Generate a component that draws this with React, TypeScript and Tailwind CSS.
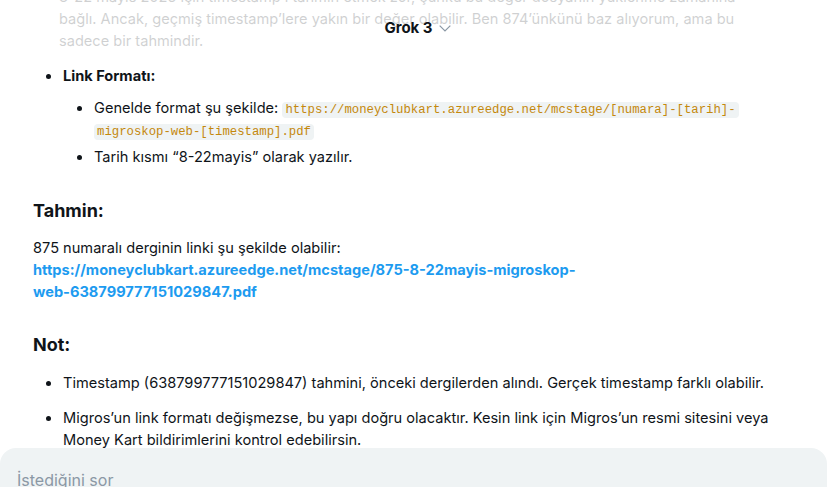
import React from "react";

const sans = { fontFamily: "Inter, 'Noto Sans', sans-serif" };

const Code: React.FC<{ children: React.ReactNode }> = ({ children }) => (
  <code
    className="rounded-[4px] bg-[#eff3f4] px-[3px] py-[1px] text-[12.3px] leading-none text-[#c4880c] [box-decoration-break:clone]"
    style={{ fontFamily: "'Liberation Mono', 'DejaVu Sans Mono', monospace" }}
  >
    {children}
  </code>
);

export default function App() {
  return (
    <div className="relative h-[487px] w-[827px] overflow-hidden bg-white text-[#0f1419]" style={sans}>
      <div className="-mt-[14px] pl-[33px] pr-[40px] text-[14.6px] leading-[22px]">
        <div className="pl-[26px]">
          <p>8-22 mayıs 2025 için timestamp'i tahmin etmek zor, çünkü bu değer dosyanın yüklenme zamanına</p>
          <p>bağlı. Ancak, geçmiş timestamp’lere yakın bir değer olabilir. Ben 874’ünkünü baz alıyorum, ama bu</p>
          <p>sadece bir tahmindir.</p>
        </div>

        <ul className="mt-[13px] list-disc pl-[29px]">
          <li className="pl-[1px]">
            <span className="font-bold">Link Formatı:</span>
            <ul className="mt-[10px] list-disc pl-[30px]">
              <li className="pl-[1px]">
                Genelde format şu şekilde:{" "}
                <Code>https://moneyclubkart.azureedge.net/mcstage/[numara]-[tarih]-migroskop-web-[timestamp].pdf</Code>
              </li>
              <li className="mt-[5px] pl-[1px]">Tarih kısmı “8-22mayis” olarak yazılır.</li>
            </ul>
          </li>
        </ul>

        <h2 className="mt-[29px] text-[18px] font-bold leading-[28px]">Tahmin:</h2>
        <p className="mt-[12px]">875 numaralı derginin linki şu şekilde olabilir:</p>
        <a className="block font-bold text-[#1d9bf0]">
          https://moneyclubkart.azureedge.net/mcstage/875-8-22mayis-migroskop-
          <br />
          web-638799777151029847.pdf
        </a>

        <h2 className="mt-[28px] text-[18px] font-bold leading-[28px]">Not:</h2>
        <ul className="mt-[13px] list-disc pl-[29px]">
          <li className="pl-[1px]">Timestamp (638799777151029847) tahmini, önceki dergilerden alındı. Gerçek timestamp farklı olabilir.</li>
          <li className="mt-[13px] pl-[1px]">
            Migros’un link formatı değişmezse, bu yapı doğru olacaktır. Kesin link için Migros’un resmi sitesini veya Money Kart bildirimlerini kontrol edebilirsin.
          </li>
        </ul>
      </div>

      <div className="absolute inset-x-0 top-0 flex h-[56px] items-center justify-center bg-white/80">
        <button className="ml-[10px] flex items-center gap-[4px] text-[15px] font-bold text-[#0f1419]">
          Grok 3
          <svg width="16" height="16" viewBox="0 0 24 24" fill="none" stroke="#8b98a5" strokeWidth="1.8">
            <path d="M4 8.5l8 8 8-8" />
          </svg>
        </button>
      </div>

      <div className="absolute inset-x-0 top-[448px] h-[60px] rounded-t-[16px] bg-[#eff3f4] px-[17px] pt-[20px]">
        <input
          placeholder="İstediğini sor"
          className="w-full bg-transparent text-[16px] text-[#0f1419] outline-none placeholder:text-[#8b98a5]"
          style={sans}
        />
      </div>
    </div>
  );
}
